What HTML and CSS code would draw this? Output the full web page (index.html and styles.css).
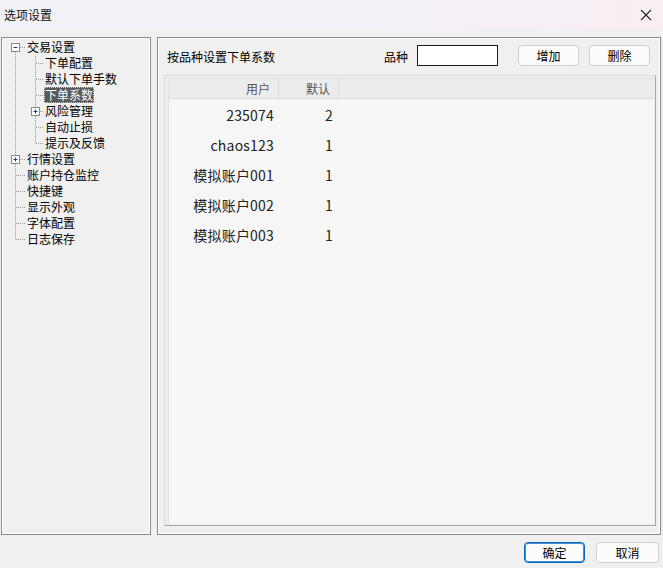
FILE: index.html
```html
<!DOCTYPE html>
<html lang="zh-CN">
<head>
<meta charset="utf-8">
<title>选项设置</title>
<link rel="stylesheet" href="styles.css">
</head>
<body>
<div class="window">
  <div class="titlebar">
    <span class="title">选项设置</span>
    <svg class="close" width="12" height="12" viewBox="0 0 12 12"><path d="M1 1 L11 11 M11 1 L1 11" stroke="#222" stroke-width="1.1" fill="none"/></svg>
  </div>
  <div class="main">
    <div class="tree">
      <svg class="lines" width="140" height="220" viewBox="0 0 140 220">
        <g stroke="#9a9a9a" stroke-width="1" stroke-dasharray="1 1" fill="none">
          <path d="M13.5 14 V202"/>
          <path d="M18 9.5 H24"/>
          <path d="M18 121.5 H24"/>
          <path d="M14 137.5 H24 M14 153.5 H24 M14 169.5 H24 M14 185.5 H24 M14 201.5 H24"/>
          <path d="M33.5 18 V106"/>
          <path d="M34 25.5 H42 M34 41.5 H42 M34 57.5 H42 M38 73.5 H42 M34 89.5 H42 M34 105.5 H42"/>
        </g>
        <g>
          <rect x="9.5" y="5.5" width="8" height="8" fill="#fff" stroke="#8a8a8a"/>
          <path d="M11.5 9.5 H15.5" stroke="#22359a"/>
          <rect x="29.5" y="69.5" width="8" height="8" fill="#fff" stroke="#8a8a8a"/>
          <path d="M31.5 73.5 H35.5 M33.5 71.5 V75.5" stroke="#22359a"/>
          <rect x="9.5" y="117.5" width="8" height="8" fill="#fff" stroke="#8a8a8a"/>
          <path d="M11.5 121.5 H15.5 M13.5 119.5 V123.5" stroke="#22359a"/>
        </g>
      </svg>
      <div class="row l1"><span class="label">交易设置</span></div>
      <div class="row l2"><span class="label">下单配置</span></div>
      <div class="row l2"><span class="label">默认下单手数</span></div>
      <div class="row l2"><span class="label selected">下单系数</span></div>
      <div class="row l2"><span class="label">风险管理</span></div>
      <div class="row l2"><span class="label">自动止损</span></div>
      <div class="row l2"><span class="label">提示及反馈</span></div>
      <div class="row l1"><span class="label">行情设置</span></div>
      <div class="row l1"><span class="label">账户持仓监控</span></div>
      <div class="row l1"><span class="label">快捷键</span></div>
      <div class="row l1"><span class="label">显示外观</span></div>
      <div class="row l1"><span class="label">字体配置</span></div>
      <div class="row l1"><span class="label">日志保存</span></div>
    </div>
    <div class="panel">
      <div class="toolbar">
        <span class="heading">按品种设置下单系数</span>
        <span class="field-label">品种</span>
        <span class="input"></span>
        <button class="btn add">增加</button>
        <button class="btn del">删除</button>
      </div>
      <div class="table">
        <div class="grid">
          <div class="thead">
            <div class="th c1">用户</div>
            <div class="th c2">默认</div>
            <div class="th c3"></div>
          </div>
          <div class="tbody">
            <div class="tr"><div class="td c1">235074</div><div class="td c2">2</div></div>
            <div class="tr"><div class="td c1">chaos123</div><div class="td c2">1</div></div>
            <div class="tr"><div class="td c1">模拟账户001</div><div class="td c2">1</div></div>
            <div class="tr"><div class="td c1">模拟账户002</div><div class="td c2">1</div></div>
            <div class="tr"><div class="td c1">模拟账户003</div><div class="td c2">1</div></div>
          </div>
        </div>
      </div>
    </div>
  </div>
  <div class="footer">
    <button class="btn ok">确定</button>
    <button class="btn cancel">取消</button>
  </div>
</div>
</body>
</html>
```
FILE: styles.css
```css
* { box-sizing: border-box; }
html, body {
  margin: 0;
  padding: 0;
}
body {
  width: 663px;
  height: 568px;
  background: #f0f0f0;
  font-family: "Noto Sans CJK SC", "Noto Sans", sans-serif;
  font-size: 12px;
  color: #000;
  overflow: hidden;
}
.window {
  width: 663px;
  height: 568px;
  display: flex;
  flex-direction: column;
}
.titlebar {
  height: 30px;
  flex: none;
  display: flex;
  align-items: center;
  justify-content: space-between;
  padding: 0 10px 1px 4px;
  background: linear-gradient(to right, #f1f2f7 0%, #f3f1f7 55%, #f8eef4 100%);
}
.title {
  font-size: 12px;
  line-height: 14px;
  color: #111;
}
.close { display: block; margin-right: 1px; }

.main {
  display: flex;
  gap: 6px;
  padding: 7px 2px 0 1px;
  height: 505px;
  flex: none;
}
.tree {
  position: relative;
  width: 150px;
  height: 498px;
  border: 1px solid #868a90;
  box-shadow: inset 1px 1px 0 #fff, inset -1px -1px 0 #fff;
  background: #f0f0f0;
  padding-top: 1px;
}
.lines {
  position: absolute;
  left: 0;
  top: 0;
}
.row {
  position: relative;
  height: 16px;
  line-height: 16px;
  white-space: nowrap;
}
.row.l1 { padding-left: 24px; }
.row.l2 { padding-left: 42px; }
.label {
  display: inline-block;
  height: 16px;
  line-height: 16px;
  padding: 0 1px;
  font-size: 12px;
  color: #000;
}
.label.selected {
  background: #595959;
  color: #fff;
  outline: 1px dotted #cfcfcf;
  outline-offset: -1px;
}

.panel {
  flex: 1;
  height: 498px;
  border: 1px solid #868a90;
  box-shadow: inset 1px 1px 0 #fff, inset -1px -1px 0 #fff;
  display: flex;
  flex-direction: column;
}
.toolbar {
  display: flex;
  align-items: center;
  height: 21px;
  margin-top: 7px;
  padding-left: 9px;
  padding-right: 10px;
  flex: none;
}
.heading { font-size: 12px; margin-top: 2px; }
.field-label { margin-left: auto; font-size: 12px; margin-top: 1px; }
.input {
  display: block;
  width: 81px;
  height: 21px;
  margin-left: 9px;
  background: #fff;
  border: 1px solid #1a1a1a;
}
.btn {
  font-family: "Noto Sans CJK SC", "Noto Sans", sans-serif;
  font-size: 12px;
  height: 21px;
  padding: 0;
  background: #fcfcfc;
  border: 1px solid #d0d0d0;
  border-radius: 4px;
  color: #000;
  line-height: 18px;
}
.btn.add { width: 61px; margin-left: 20px; }
.btn.del { width: 61px; margin-left: 10px; }

.table {
  flex: 1;
  margin: 9px 4px 8px 6px;
  border: 1px solid;
  border-color: #d8dde2 #a8a8a8 #a8a8a8 #d8dde2;
  padding: 2px 1px 1px 3px;
  background: #eeeeee;
  display: flex;
}
.grid {
  flex: 1;
  background: #f6f6f6;
  border-top: 1px solid #e2e2e2;
  border-left: 1px solid #e2e2e2;
  display: flex;
  flex-direction: column;
}
.thead {
  display: flex;
  height: 20px;
  background: #ececec;
  border-bottom: 1px solid #dcdcdc;
  color: #555;
  flex: none;
}
.th {
  text-align: right;
  line-height: 19px;
  font-size: 12px;
  border-right: 1px solid #dcdcdc;
}
.th.c1 { width: 110px; padding-right: 8px; }
.th.c2 { width: 60px; padding-right: 8px; }
.th.c3 { flex: 1; border-right: none; }
.tbody { padding-top: 1px; }
.tr {
  display: flex;
  height: 30px;
  align-items: center;
  font-size: 14px;
  color: #222;
}
.td { text-align: right; letter-spacing: 0.2px; }
.td.c1 { width: 110px; padding-right: 5px; }
.td.c2 { width: 60px; padding-right: 6px; }

.footer {
  display: flex;
  justify-content: flex-end;
  gap: 11px;
  padding: 7px 4px 0 0;
}
.btn.ok {
  width: 61px;
  border: 1px solid #0067c0;
  box-shadow: inset 0 0 0 1px #4a8fd0;
}
.btn.cancel { width: 63px; }
```
